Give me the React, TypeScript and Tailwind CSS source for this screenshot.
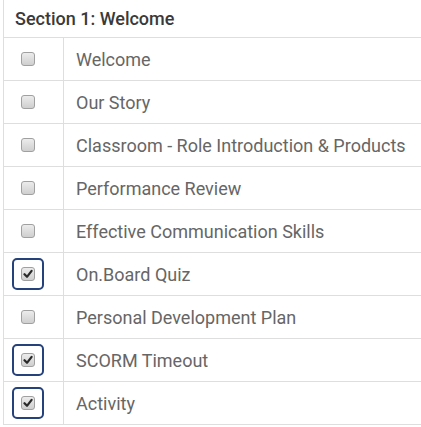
const items = [
  { title: 'Welcome', done: false },
  { title: 'Our Story', done: false },
  { title: 'Classroom - Role Introduction & Products', done: false },
  { title: 'Performance Review', done: false },
  { title: 'Effective Communication Skills', done: false },
  { title: 'On.Board Quiz', done: true },
  { title: 'Personal Development Plan', done: false },
  { title: 'SCORM Timeout', done: true },
  { title: 'Activity', done: true },
];

function Box({ checked }: { checked: boolean }) {
  return (
    <span className={`flex h-[32px] w-[32px] items-center justify-center rounded-[5px] border-2 ${checked ? 'border-[#26427a]' : 'border-transparent'}`}>
      <span className="flex h-[14px] w-[14px] items-center justify-center rounded-[3px] border border-[#a0a0a0] bg-gradient-to-b from-[#ececec] to-[#cfcfcf]">
        {checked && (
          <svg width="10" height="10" viewBox="0 0 10 10">
            <path d="M1.5 5.2 L4 7.8 L8.6 1.8" fill="none" stroke="#2a2a2a" strokeWidth="2.2" strokeLinecap="round" strokeLinejoin="round" />
          </svg>
        )}
      </span>
    </span>
  );
}

export default function App() {
  return (
    <div className="h-[427px] w-[421px] overflow-hidden bg-white" style={{ fontFamily: 'Roboto, "Liberation Sans", sans-serif' }}>
      <div className="ml-[3px] w-[440px] border-l border-[#dedede]">
        <div className="flex h-[38px] items-center border-b border-[#dedede] pl-[11px] text-[18px] font-medium text-[#3a3a3a]">
          Section 1: Welcome
        </div>
        {items.map(item => (
          <div key={item.title} className="flex h-[43px] border-b border-[#dedede]">
            <div className="flex w-[60px] shrink-0 items-center border-r border-[#dedede] pl-[8px]">
              <Box checked={item.done} />
            </div>
            <div className="flex items-center whitespace-nowrap pl-[12px] text-[18px] font-normal text-[#666]">{item.title}</div>
          </div>
        ))}
      </div>
    </div>
  );
}
